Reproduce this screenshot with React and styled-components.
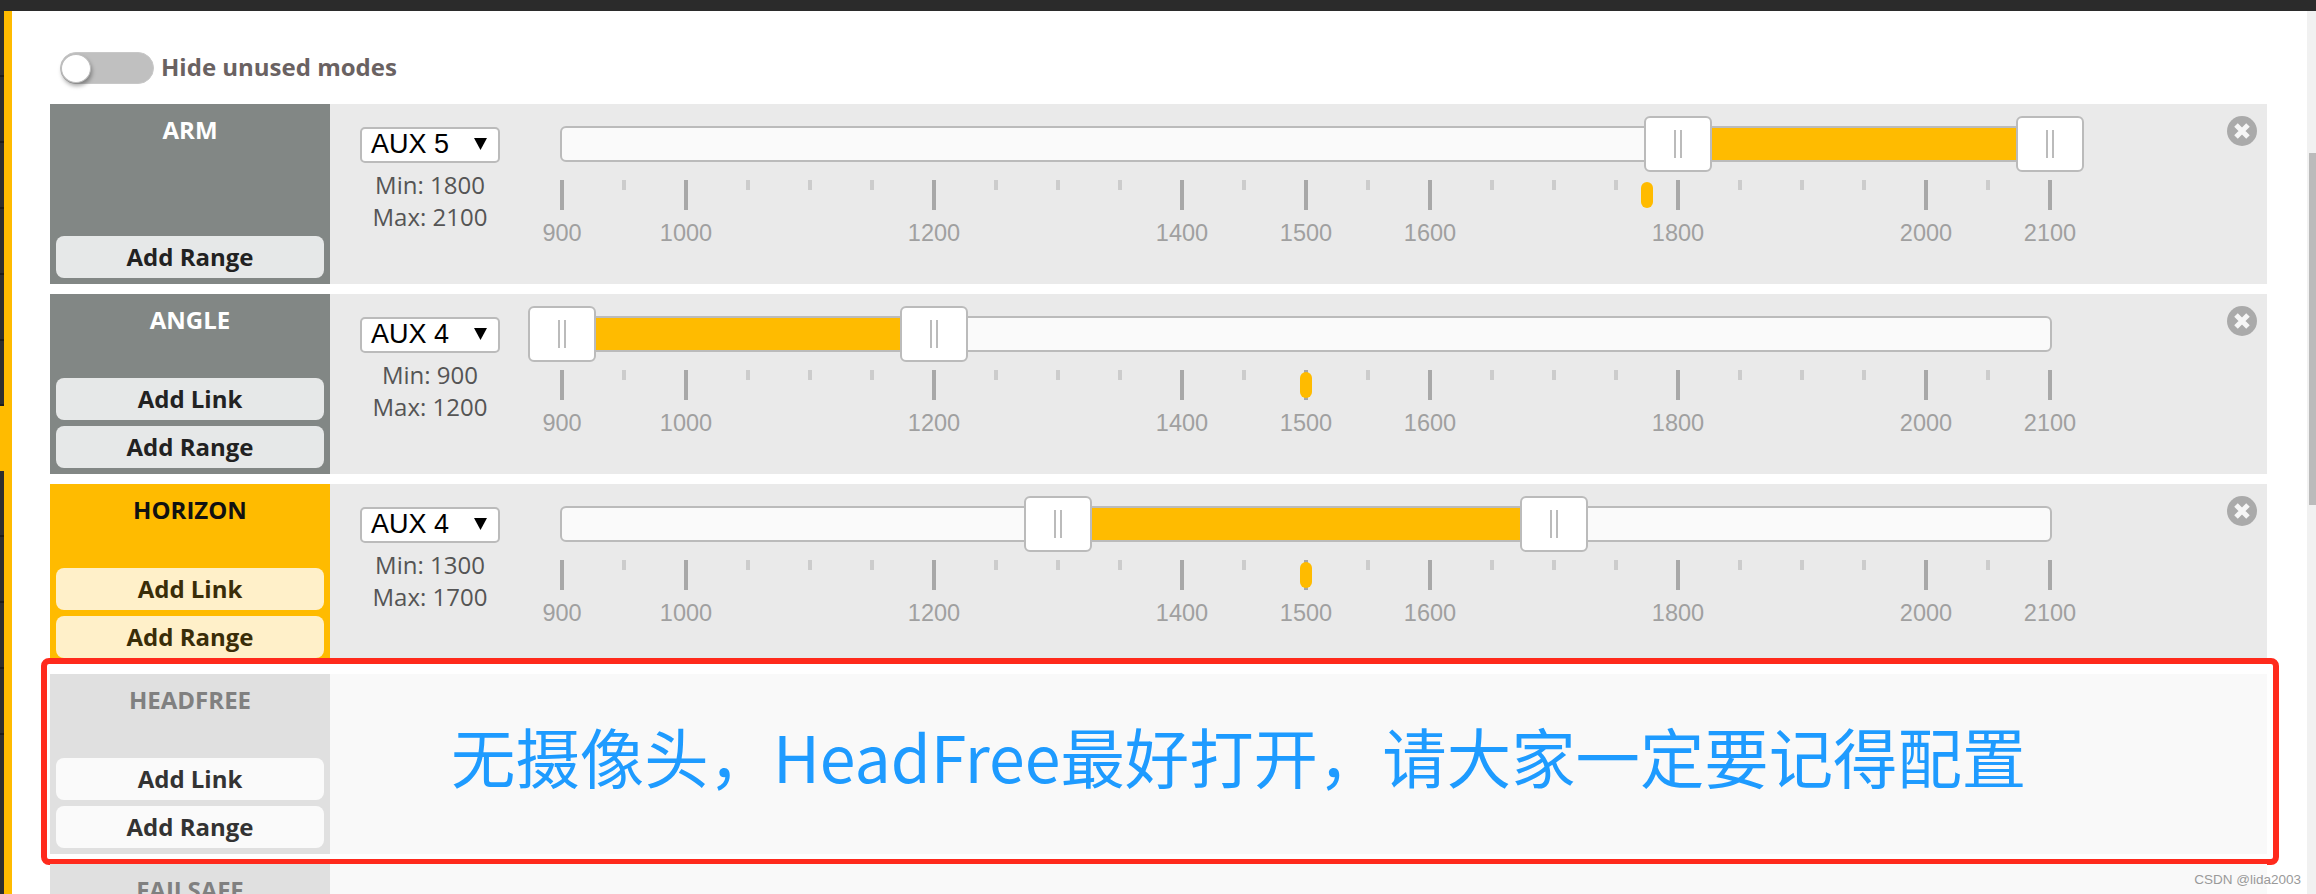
import React from 'react'
import styled, { createGlobalStyle } from 'styled-components'

const GlobalStyle = createGlobalStyle`
  html, body { margin: 0; padding: 0; background: #fff; overflow: hidden; }
  * { box-sizing: border-box; }
`

const Window = styled.div`
  position: relative;
  width: 2316px;
  height: 894px;
  overflow: hidden;
  display: flex;
  flex-direction: column;
  font-family: "Open Sans", sans-serif;
`
const TopBar = styled.div`
  height: 11px;
  flex: none;
  background: #2b2b2b;
`
const Body = styled.div`
  flex: 1;
  min-height: 0;
  display: flex;
`
const TabRail = styled.div`
  width: 4px;
  flex: none;
  display: flex;
  flex-direction: column;
  background: #2e2e2e;
`
const RailTab = styled.div`
  height: ${p => p.$h}px;
  flex: none;
  background: ${p => (p.$active ? '#ffbb00' : '#2e2e2e')};
  border-bottom: ${p => (p.$active ? 'none' : '2px solid #1c1c1c')};
`
const RailAccent = styled.div`
  width: 8px;
  flex: none;
  background: #ffbb00;
`
const Main = styled.div`
  flex: 1;
  min-width: 0;
  padding: 41px 40px 0 38px;
  background: #fff;
`
const ScrollTrack = styled.div`
  width: 9px;
  flex: none;
  padding: 142px 0 0 2px;
  background: #f1f1f1;
`
const ScrollThumb = styled.div`
  height: 352px;
  background: #bbbbbb;
`
const ToggleRow = styled.div`
  height: 31px;
  margin: 0 0 21px 10px;
  display: flex;
  align-items: center;
  gap: 7px;
`
const Toggle = styled.div`
  width: 94px;
  height: 32px;
  padding: 1px 0 0 0;
  border-radius: 16px;
  background: #c0c0c0;
  border: 1px solid #c8c8c8;
`
const Knob = styled.div`
  width: 30px;
  height: 29px;
  border-radius: 50%;
  background: #fff;
  border: 1px solid #bdbdbd;
  box-shadow: 1px 3px 4px rgba(0, 0, 0, 0.35);
`
const ToggleLabel = styled.span`
  margin-top: -3px;
  font-size: 24px;
  font-weight: 700;
  color: #6a6262;
`
const Row = styled.div`
  position: relative;
  height: 180px;
  margin-bottom: 10px;
  display: grid;
  grid-template-columns: 280px 1fr;
`
const LabelCol = styled.div`
  display: flex;
  flex-direction: column;
  align-items: stretch;
  gap: 6px;
  padding: 10px 6px 6px;
  background: ${p => p.$bg};
`
const Title = styled.div`
  flex: 1;
  font-size: 24px;
  line-height: 32px;
  font-weight: 700;
  text-align: center;
  color: ${p => p.$color};
`
const RangeButton = styled.div`
  height: 42px;
  flex: none;
  border-radius: 8px;
  background: ${p => p.$bg};
  color: ${p => p.$color};
  font-size: 24px;
  line-height: 41px;
  font-weight: 700;
  text-align: center;
`
const Pane = styled.div`
  position: relative;
  display: flex;
  padding: 23px 0 0 30px;
  background: ${p => p.$bg};
`
const SelectCol = styled.div`
  width: 140px;
  flex: none;
  text-align: center;
  font-size: 24px;
  line-height: 32px;
  color: #555;
`
const AuxSelect = styled.div`
  height: 36px;
  margin-bottom: 6px;
  padding: 0 11px 2px 9px;
  display: flex;
  align-items: center;
  justify-content: space-between;
  border: 2px solid #bbb;
  border-radius: 5px;
  background: #fff;
  color: #000;
  font-family: "Liberation Sans", sans-serif;
  font-size: 27px;
`
const SliderCol = styled.div`
  width: 1492px;
  flex: none;
  margin: -1px 0 0 60px;
`
const Track = styled.div`
  position: relative;
  height: 36px;
  border: 2px solid #bbb;
  border-radius: 6px;
  background: #fafafa;
`
const Fill = styled.div`
  position: absolute;
  top: 0;
  bottom: 0;
  background: #ffbb00;
`
const Handle = styled.div`
  position: absolute;
  top: -12px;
  width: 68px;
  height: 56px;
  margin-left: -34px;
  display: flex;
  align-items: center;
  justify-content: center;
  gap: 4px;
  border: 2px solid #bbb;
  border-radius: 6px;
  background: #fff;
`
const Grip = styled.div`
  width: 2px;
  height: 28px;
  background: #bbb;
`
const Scale = styled.div`
  position: relative;
  margin-top: 18px;
  display: flex;
  justify-content: space-between;
`
const TickCol = styled.div`
  width: 4px;
  height: 30px;
  display: flex;
  flex-direction: column;
  align-items: center;
`
const Tick = styled.div`
  width: 4px;
  flex: none;
  height: ${p => (p.$big ? 30 : 10)}px;
  background: ${p => (p.$big ? '#a8a8a8' : '#cccccc')};
`
const TickLabel = styled.div`
  flex: none;
  margin-top: 9px;
  font-family: "Liberation Sans", sans-serif;
  font-size: 23.5px;
  line-height: 28px;
  color: #a0a0a0;
`
const Marker = styled.div`
  position: absolute;
  top: 2px;
  width: 12px;
  height: 26px;
  margin-left: -6px;
  border-radius: 6px;
  background: #ffbb00;
`
const CloseButton = styled.svg`
  position: absolute;
  top: 12px;
  right: 10px;
  width: 30px;
  height: 30px;
`
const Note = styled.div`
  flex: 1;
  height: 116px;
  padding-left: 91px;
  display: flex;
  align-items: center;
  font-family: "Noto Sans CJK SC", sans-serif;
  font-size: 64.4px;
  font-weight: 400;
  color: #1e9bff;
  white-space: nowrap;
`
const RedBox = styled.div`
  position: absolute;
  top: -16px;
  bottom: -11px;
  left: -9px;
  right: -12px;
  border: 6px solid #ff2a1c;
  border-radius: 8px;
  pointer-events: none;
`
const Watermark = styled.div`
  position: absolute;
  right: 15px;
  bottom: 7px;
  font-family: "Liberation Sans", sans-serif;
  font-size: 13.5px;
  line-height: 15px;
  color: #9a9a9a;
`

const BIG = [900, 1000, 1200, 1400, 1500, 1600, 1800, 2000, 2100]
const TICKS = Array.from({ length: 25 }, (_, i) => 900 + i * 50)
const pct = v => ((v - 900) / 1200) * 1488 + 0

const THEMES = {
  idle: { bg: '#828785', title: '#fff', btn: '#e6e8e8', text: '#222', pane: '#eaeaea' },
  active: { bg: '#ffbb00', title: '#111', btn: '#fff0c9', text: '#3a2d08', pane: '#eaeaea' },
  off: { bg: '#e0e0e0', title: '#808080', btn: '#fafafa', text: '#333', pane: '#f9f9f9' },
}

function Slider({ min, max, marker }) {
  return (
    <SliderCol>
      <Track>
        <Fill style={{ left: pct(min), width: pct(max) - pct(min) }} />
        <Handle style={{ left: pct(min) }}><Grip /><Grip /></Handle>
        <Handle style={{ left: pct(max) }}><Grip /><Grip /></Handle>
      </Track>
      <Scale>
        {TICKS.map(t => (
          <TickCol key={t}>
            <Tick $big={BIG.includes(t)} />
            {BIG.includes(t) && <TickLabel>{t}</TickLabel>}
          </TickCol>
        ))}
        <Marker style={{ left: pct(marker) + 2 }} />
      </Scale>
    </SliderCol>
  )
}

function Close() {
  return (
    <CloseButton viewBox="0 0 30 30">
      <circle cx="15" cy="15" r="15" fill="#aaaaaa" />
      <path d="M9 9 L21 21 M21 9 L9 21" stroke="#f6f6f6" strokeWidth="5" />
    </CloseButton>
  )
}

function Labels({ name, theme, link }) {
  const t = THEMES[theme]
  return (
    <LabelCol $bg={t.bg}>
      <Title $color={t.title}>{name}</Title>
      {link && <RangeButton $bg={t.btn} $color={t.text}>Add Link</RangeButton>}
      <RangeButton $bg={t.btn} $color={t.text}>Add Range</RangeButton>
    </LabelCol>
  )
}

function ModeRow({ name, theme, link, aux, min, max, marker }) {
  return (
    <Row>
      <Labels name={name} theme={theme} link={link} />
      <Pane $bg={THEMES[theme].pane}>
        <SelectCol>
          <AuxSelect>
            {aux}
            <svg width="13" height="12" viewBox="0 0 13 12"><polygon points="0,0 13,0 6.5,12" fill="#000" /></svg>
          </AuxSelect>
          <div>Min: {min}</div>
          <div>Max: {max}</div>
        </SelectCol>
        <Slider min={min} max={max} marker={marker} />
        <Close />
      </Pane>
    </Row>
  )
}

export default function App() {
  return (
    <Window>
      <GlobalStyle />
      <TopBar />
      <Body>
        <TabRail>
          {[66, 66, 66, 66, 66].map((h, i) => <RailTab key={i} $h={h} />)}
          <RailTab $h={65} />
          <RailTab $h={65} $active />
          {[66, 66, 66, 66].map((h, i) => <RailTab key={i} $h={h} />)}
        </TabRail>
        <RailAccent />
        <Main>
          <ToggleRow>
            <Toggle><Knob /></Toggle>
            <ToggleLabel>Hide unused modes</ToggleLabel>
          </ToggleRow>
          <ModeRow name="ARM" theme="idle" aux="AUX 5" min={1800} max={2100} marker={1775} />
          <ModeRow name="ANGLE" theme="idle" link aux="AUX 4" min={900} max={1200} marker={1500} />
          <ModeRow name="HORIZON" theme="active" link aux="AUX 4" min={1300} max={1700} marker={1500} />
          <Row>
            <Labels name="HEADFREE" theme="off" link />
            <Pane $bg={THEMES.off.pane}>
              <Note>无摄像头，HeadFree最好打开，请大家一定要记得配置</Note>
            </Pane>
            <RedBox />
          </Row>
          <Row>
            <Labels name="FAILSAFE" theme="off" />
            <Pane $bg={THEMES.off.pane} />
          </Row>
        </Main>
        <ScrollTrack><ScrollThumb /></ScrollTrack>
      </Body>
      <Watermark>CSDN @lida2003</Watermark>
    </Window>
  )
}
